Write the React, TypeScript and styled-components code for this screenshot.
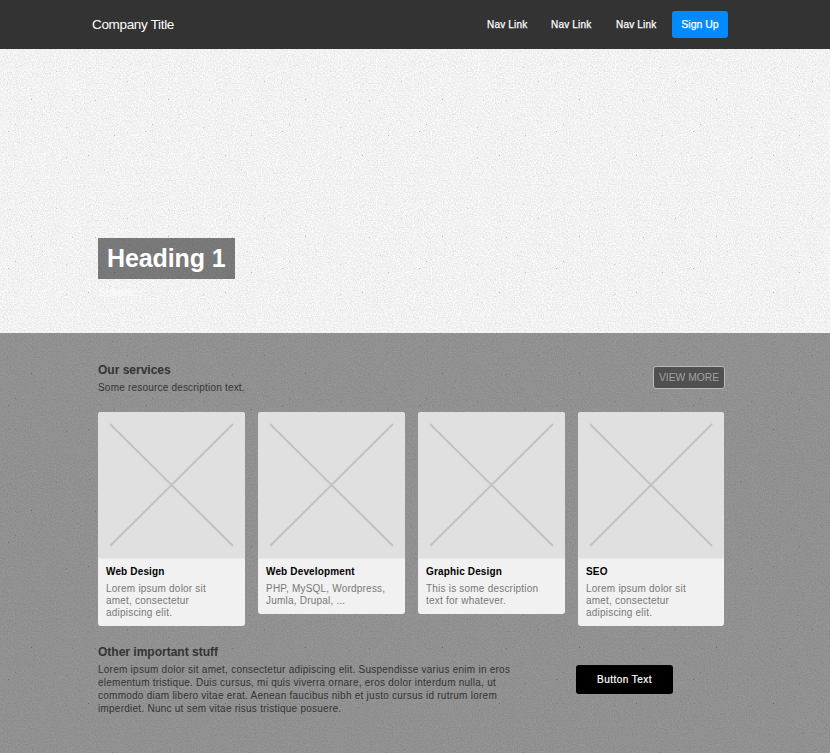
import React from 'react';
import styled, { createGlobalStyle } from 'styled-components';

const GlobalStyle = createGlobalStyle`
  * { box-sizing: border-box; }
  html, body { margin: 0; }
  body { font-family: 'Liberation Sans', Arial, sans-serif; color: #333; }
  h1, h2, h3, p { margin: 0; }
`;

const Page = styled.div`
  position: relative;
  isolation: isolate;
  width: 830px;
  height: 753px;
  overflow: hidden;
  background: #f1f1f1;
`;

const PaperTexture = styled.svg`
  position: absolute;
  inset: 0;
  z-index: -1;
  width: 100%;
  height: 100%;
`;

const NavBar = styled.header`
  display: flex;
  align-items: flex-start;
  justify-content: space-between;
  height: 49px;
  padding: 11px 102px 0 92px;
  background: #333;
`;

const Brand = styled.div`
  font-size: 13.5px;
  letter-spacing: -0.33px;
  line-height: 27px;
  color: #fff;
  width: 83px;
  white-space: nowrap;
`;

const NavLinks = styled.nav`
  display: flex;
  gap: 24px;
`;

const NavLink = styled.a<{ $width?: number }>`
  width: ${(p) => p.$width ?? 41}px;
  font-size: 10px;
  line-height: 27px;
  letter-spacing: 0.2px;
  color: #fff;
  white-space: nowrap;
  -webkit-text-stroke: 0.25px #fff;
`;

const SignUp = styled.button`
  width: 56px;
  height: 27px;
  margin-left: -9px;
  padding: 0;
  border: 0;
  border-radius: 3px;
  background: #008aff;
  color: #fff;
  font: 10.5px/27px 'Liberation Sans', sans-serif;
  -webkit-text-stroke: 0.25px #fff;
`;

const Hero = styled.section`
  height: 284px;
  padding: 189px 98px 0;
`;

const HeroTitle = styled.h1`
  width: 137px;
  height: 41px;
  padding-left: 9px;
  background: rgba(0, 0, 0, 0.5);
  color: #fff;
  font-size: 25px;
  line-height: 41px;
  letter-spacing: -0.1px;
  white-space: nowrap;
`;

const HeroSubtitle = styled.p`
  margin-top: 6px;
  padding-left: 1px;
  color: #fafafa;
  font-size: 10px;
  font-weight: bold;
  line-height: 16px;
`;

const Content = styled.main`
  height: 420px;
  padding: 29px 105px 0 98px;
  background: rgba(0, 0, 0, 0.4);
`;

const SectionHeader = styled.div`
  display: flex;
  justify-content: space-between;
  height: 50px;
`;

const SectionTitle = styled.h2`
  font-size: 12px;
  line-height: 16px;
`;

const SectionText = styled.p`
  font-size: 10px;
  line-height: 13px;
  letter-spacing: 0.2px;
  white-space: nowrap;
`;

const HeaderText = styled(SectionText)`
  margin-top: 3px;
`;

const ViewMore = styled.button`
  width: 72px;
  height: 23px;
  margin-top: 4px;
  padding: 0;
  border: 1px solid #bbb;
  border-radius: 3px;
  background: #505050;
  color: #a2a2a2;
  font: 10.3px/21px 'Liberation Sans', sans-serif;
`;

const CardGrid = styled.div`
  display: grid;
  grid-template-columns: 147px 147px 147px 146px;
  gap: 13px;
  align-items: start;
  height: 232px;
`;

const Card = styled.article`
  overflow: hidden;
  border-radius: 3px;
  background: #f1f1f1;
`;

const Placeholder = styled.svg`
  display: block;
  width: 100%;
  height: 147px;
  background: linear-gradient(#e0e0e0 146px, #e9e9e9 146px);
`;

const CardBody = styled.div`
  padding: 7px 8px;
`;

const CardTitle = styled.h3`
  color: #000;
  font-size: 10px;
  line-height: 12px;
  letter-spacing: 0.15px;
`;

const CardText = styled.p`
  margin-top: 5px;
  color: #777;
  font-size: 10px;
  line-height: 12px;
  letter-spacing: 0.21px;
  white-space: nowrap;
`;

const Footer = styled.section`
  display: flex;
`;

const FooterText = styled.div`
  width: 478px;
`;

const FooterCopy = styled(SectionText)`
  margin-top: 3px;
  letter-spacing: 0.25px;
`;

const BlackButton = styled.button`
  width: 97px;
  height: 29px;
  margin-top: 21px;
  padding: 0;
  border: 0;
  border-radius: 3px;
  background: #000;
  color: #fff;
  font: 10px/29px 'Liberation Sans', sans-serif;
  letter-spacing: 0.45px;
  -webkit-text-stroke: 0.2px #fff;
`;

const specks = [
  [31, 59, 0.5], [8, 91, 0.45], [88, 115, 0.5], [42, 74, 0.3], [112, 27, 0.35],
  [95, 60, 0.35], [66, 87, 0.28], [66, 117, 0.28], [110, 74, 0.25], [127, 41, 0.35],
  [15, 84, 0.28], [114, 95, 0.35], [89, 28, 0.22], [72, 60, 0.25], [9, 115, 0.2],
  [104, 129, 0.25], [106, 78, 0.28], [56, 31, 0.2], [15, 60, 0.2],
];

const Paper = () => (
  <PaperTexture aria-hidden="true">
    <defs>
      <filter id="grain" x="0" y="0" width="100%" height="100%" colorInterpolationFilters="sRGB">
        <feTurbulence type="fractalNoise" baseFrequency="0.83" numOctaves="3" seed="8" />
        <feColorMatrix values="0.15 0.11 0 0 0.818  0.15 0.11 0 0 0.818  0.15 0.11 0 0 0.818  0 0 0 0 1" />
      </filter>
      <pattern id="paper" width="137" height="137" patternUnits="userSpaceOnUse">
        <rect width="137" height="137" filter="url(#grain)" />
        {specks.map(([x, y, opacity]) => (
          <rect key={`${x}-${y}`} x={x} y={y} width="1" height="1" fill="#333" opacity={opacity * 0.7} />
        ))}
      </pattern>
    </defs>
    <rect width="100%" height="100%" fill="url(#paper)" transform="translate(0 40)" />
  </PaperTexture>
);

const services = [
  { title: 'Web Design', lines: ['Lorem ipsum dolor sit', 'amet, consectetur', 'adipiscing elit.'] },
  { title: 'Web Development', lines: ['PHP, MySQL, Wordpress,', 'Jumla, Drupal, ...'] },
  { title: 'Graphic Design', lines: ['This is some description', 'text for whatever.'] },
  { title: 'SEO', lines: ['Lorem ipsum dolor sit', 'amet, consectetur', 'adipiscing elit.'] },
];

const copy = [
  'Lorem ipsum dolor sit amet, consectetur adipiscing elit. Suspendisse varius enim in eros',
  'elementum tristique. Duis cursus, mi quis viverra ornare, eros dolor interdum nulla, ut',
  'commodo diam libero vitae erat. Aenean faucibus nibh et justo cursus id rutrum lorem',
  'imperdiet. Nunc ut sem vitae risus tristique posuere.',
];

const Lines = ({ items }: { items: string[] }) => (
  <>
    {items.map((line, i) => (
      <React.Fragment key={line}>
        {i > 0 && <br />}
        {line}
      </React.Fragment>
    ))}
  </>
);

export default function App() {
  return (
    <Page>
      <GlobalStyle />
      <Paper />
      <NavBar>
        <Brand>Company Title</Brand>
        <NavLinks>
          <NavLink $width={40}>Nav Link</NavLink>
          <NavLink>Nav Link</NavLink>
          <NavLink>Nav Link</NavLink>
          <SignUp>Sign Up</SignUp>
        </NavLinks>
      </NavBar>
      <Hero>
        <HeroTitle>Heading 1</HeroTitle>
        <HeroSubtitle>Subtitle</HeroSubtitle>
      </Hero>
      <Content>
        <SectionHeader>
          <div>
            <SectionTitle>Our services</SectionTitle>
            <HeaderText>Some resource description text.</HeaderText>
          </div>
          <ViewMore>VIEW MORE</ViewMore>
        </SectionHeader>
        <CardGrid>
          {services.map(({ title, lines }) => (
            <Card key={title}>
              <Placeholder viewBox="0 0 147 147" preserveAspectRatio="none">
                <path d="M12 12 135 134M135 12 12 134" stroke="#c2c2c2" strokeWidth="2" />
              </Placeholder>
              <CardBody>
                <CardTitle>{title}</CardTitle>
                <CardText><Lines items={lines} /></CardText>
              </CardBody>
            </Card>
          ))}
        </CardGrid>
        <Footer>
          <FooterText>
            <SectionTitle>Other important stuff</SectionTitle>
            <FooterCopy><Lines items={copy} /></FooterCopy>
          </FooterText>
          <BlackButton>Button Text</BlackButton>
        </Footer>
      </Content>
    </Page>
  );
}
